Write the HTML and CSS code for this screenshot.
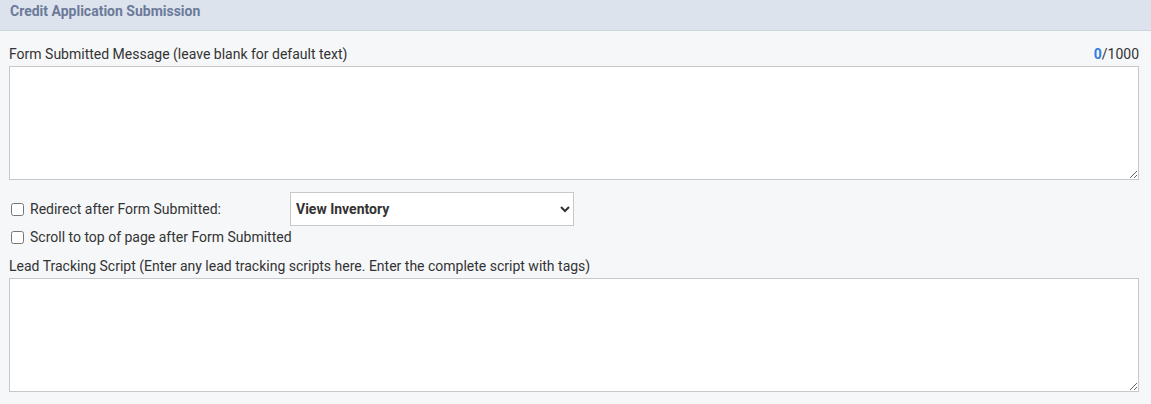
FILE: index.html
```html
<!DOCTYPE html>
<html>
<head>
	<title>Credit Application Submission</title>
	<meta http-equiv="content-type" content="text/html; charset=utf-8" />
	<link rel="stylesheet" href="styles.css">
</head>
<body>
	<div class="panel-head">Credit Application Submission</div>

	<div class="panel-body">
		<div class="field-head">
			<span>Form Submitted Message (leave blank for default text)</span>
			<span><strong class="count">0</strong>/1000</span>
		</div>
		<textarea class="box"></textarea>

		<div class="check-row first">
			<label class="check-label wide"><input type="checkbox"> Redirect after Form Submitted:</label>
			<select class="pick">
				<option>View Inventory</option>
			</select>
		</div>
		<div class="check-row">
			<label class="check-label"><input type="checkbox"> Scroll to top of page after Form Submitted</label>
		</div>

		<div class="field-head second">
			<span>Lead Tracking Script (Enter any lead tracking scripts here. Enter the complete script with tags)</span>
		</div>
		<textarea class="box"></textarea>
	</div>
</body>
</html>
```

FILE: styles.css
```css
body {
	margin:0;
	background:#f6f7f9;
	font-family:Roboto, "Liberation Sans", sans-serif;
	font-size:14px;
	color:#333;
}

.panel-head {
	height:31px;
	box-sizing:border-box;
	background:#dde3ed;
	border-bottom:1px solid #cdd3dc;
	padding:3px 10px 0 10px;
	line-height:16px;
	font-size:14px;
	font-weight:700;
	color:#6b7a99;
}

.panel-body {
	padding:13px 12px 0 9px;
}

.field-head {
	display:flex;
	justify-content:space-between;
	line-height:20px;
	margin-bottom:2px;
}

.field-head.second {
	margin-top:9px;
}

.count {
	color:#2f7de1;
}

.box {
	display:block;
	width:100%;
	height:114px;
	box-sizing:border-box;
	border:1px solid #c8c8c8;
	background:#fff;
	margin:0;
}

.check-row {
	display:flex;
	align-items:center;
	min-height:20px;
}

.check-row.first {
	margin-top:12px;
	margin-bottom:1px;
}

.check-label {
	display:flex;
	align-items:center;
	line-height:20px;
}

.check-label input {
	width:13px;
	height:13px;
	margin:0 6px 0 2px;
}

.wide {
	width:281px;
}

.pick {
	width:284px;
	height:34px;
	box-sizing:border-box;
	border:1px solid #c8c8c8;
	border-radius:0;
	background:#fff;
	padding:0 1px;
	font-family:Roboto, "Liberation Sans", sans-serif;
	font-size:14px;
	font-weight:700;
	color:#333;
}
```
